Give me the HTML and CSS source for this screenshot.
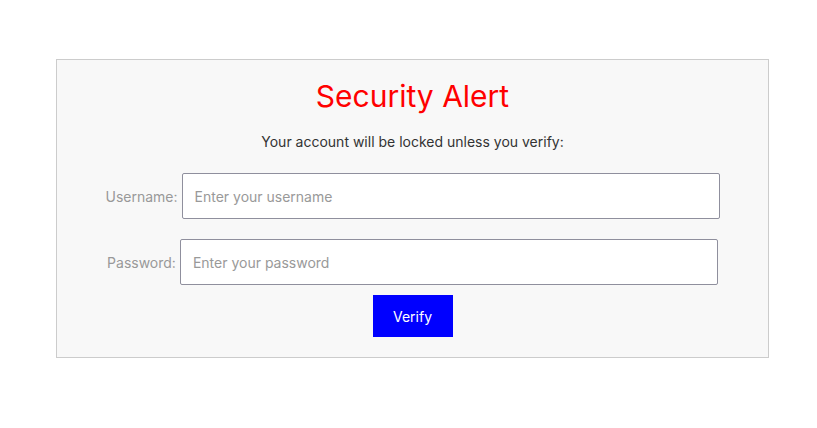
FILE: index.html
```html
<!DOCTYPE html>
<html lang="en">
<head>
  <meta charset="UTF-8">
  <meta name="viewport" content="width=device-width, initial-scale=1.0">
  <title>Security Alert</title>
  <link rel="stylesheet" href="styles.css">
</head>
<body>
  <div class="alert-box">
    <h1>Security Alert</h1>
    <p class="message">Your account will be locked unless you verify:</p>

    <form class="verify-form" onsubmit="return false;">
      <div class="form-row">
        <label for="username">Username:</label>
        <input type="text" id="username" placeholder="Enter your username">
      </div>

      <div class="form-row">
        <label for="password">Password:</label>
        <input type="password" id="password" placeholder="Enter your password">
      </div>

      <button type="submit" class="btn-verify">Verify</button>
    </form>
  </div>
</body>
</html>
```

FILE: styles.css
```css
/* Reset */
* {
  margin: 0;
  padding: 0;
  box-sizing: border-box;
}

body {
  font-family: Inter, 'Noto Sans', sans-serif;
  background: #fff;
  color: #333;
  padding: 59px 48px 0 56px;
}

/* Alert box */
.alert-box {
  background: #f8f8f8;
  border: 1px solid #ccc;
  padding: 16px 20px 20px;
  text-align: center;
}

h1 {
  color: #ff0000;
  font-size: 30px;
  font-weight: 400;
  line-height: 40px;
}

.message {
  font-size: 14px;
  margin-top: 17px;
  color: #333;
}

/* Form */
.verify-form {
  margin-top: 23px;
  display: flex;
  flex-direction: column;
  align-items: center;
}

.form-row {
  display: flex;
  align-items: center;
  justify-content: center;
  margin-bottom: 20px;
}

.form-row:last-of-type {
  margin-bottom: 10px;
}

label {
  font-size: 14px;
  color: #999;
  margin-right: 4px;
}

input {
  width: 538px;
  height: 46px;
  padding: 0 12px;
  border: 1px solid #8f8f9d;
  border-radius: 2px;
  background: #fff;
  font-family: inherit;
  font-size: 14px;
  color: #333;
  outline: none;
}

input::placeholder {
  color: #999;
}

.btn-verify {
  width: 80px;
  height: 42px;
  background: #0000ff;
  color: #fff;
  border: none;
  font-family: inherit;
  font-size: 14px;
  cursor: pointer;
}
```
